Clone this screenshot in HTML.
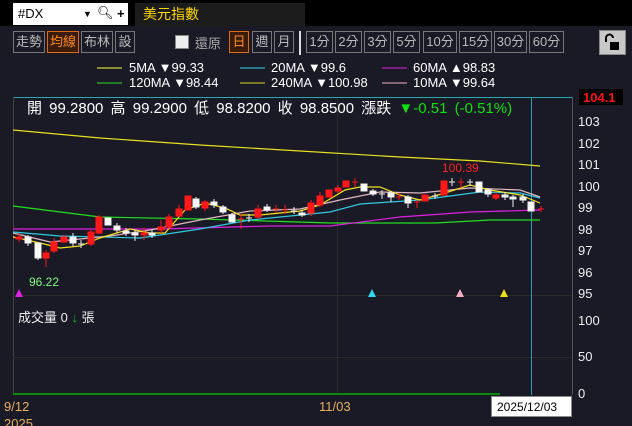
<!DOCTYPE html><html><head><meta charset="utf-8"><style>
body{margin:0;width:632px;height:426px;background:#1a1926;overflow:hidden;position:relative;font-family:"Liberation Sans","Noto Sans CJK TC",sans-serif;color:#ddd}
.a{position:absolute;white-space:nowrap}
.b{position:absolute;top:31px;height:20px;border:1px solid #777;color:#bbb;font-size:13px;line-height:20px;text-align:center;box-sizing:border-box;height:22px}
.o{border-color:#e06a10;color:#ff8a20;background:#3a1c08}
</style></head><body>
<div class="a" style="left:0;top:0;width:632px;height:26px;background:#000"></div>
<div class="a" style="left:13px;top:3px;width:115px;height:22px;background:#fff;color:#000;font-size:13px;line-height:22px;padding-left:5px;box-sizing:border-box">#DX<span style="position:absolute;left:70px;font-size:9px">▼</span><span style="position:absolute;left:84px;top:-1px">🔍︎</span><span style="position:absolute;left:104px;font-weight:bold">+</span></div>
<div class="a" style="left:135px;top:3px;width:170px;height:23px;background:#1c1c1c;color:#ffd800;font-size:14px;line-height:23px;padding-left:8px;box-sizing:border-box">美元指數</div>
<div class="b" style="left:13px;width:32px">走勢</div>
<div class="b o" style="left:47px;width:32px">均線</div>
<div class="b" style="left:81px;width:32px">布林</div>
<div class="b" style="left:115px;width:20px">設</div>
<div class="a" style="left:175px;top:35px;width:12px;height:12px;background:#eee;border:1px solid #888"></div>
<div class="a" style="left:195px;top:33px;font-size:13px;color:#aaa">還原</div>
<div class="b o" style="left:229px;width:20px">日</div>
<div class="b" style="left:252px;width:20px">週</div>
<div class="b" style="left:274px;width:20px">月</div>
<div class="a" style="left:299px;top:31px;width:2px;height:24px;background:#ddd"></div>
<div class="b" style="left:306px;width:27px">1分</div>
<div class="b" style="left:335px;width:27px">2分</div>
<div class="b" style="left:364px;width:27px">3分</div>
<div class="b" style="left:393px;width:27px">5分</div>
<div class="b" style="left:423px;width:34px">10分</div>
<div class="b" style="left:459px;width:33px">15分</div>
<div class="b" style="left:494px;width:33px">30分</div>
<div class="b" style="left:529px;width:35px">60分</div>
<div class="a" style="left:599px;top:30px;width:25px;height:23px;background:#c8c8c8;border:1px solid #888"><svg width="25" height="23"><path d="M6 11V7a3.5 3.5 0 0 1 7 0" stroke="#000" stroke-width="2" fill="none"/><rect x="10" y="11" width="9" height="8" fill="#000"/></svg></div>
<svg class="a" style="left:0;top:0" width="632" height="426">
<g stroke-width="1"><line x1="97" y1="68" x2="122" y2="68" stroke="#ffff40"/><line x1="240" y1="68" x2="265" y2="68" stroke="#30d8e8"/><line x1="382" y1="68" x2="407" y2="68" stroke="#e020e0"/>
<line x1="97" y1="83" x2="122" y2="83" stroke="#30e030"/><line x1="240" y1="83" x2="265" y2="83" stroke="#e8d820"/><line x1="382" y1="83" x2="407" y2="83" stroke="#f0b0c0"/></g>
<g font-size="13" fill="#fff" font-family="Liberation Sans,sans-serif"><text x="129" y="72">5MA ▼99.33</text><text x="271" y="72">20MA ▼99.6</text><text x="413" y="72">60MA ▲98.83</text>
<text x="129" y="87">120MA ▼98.44</text><text x="271" y="87">240MA ▼100.98</text><text x="413" y="87">10MA ▼99.64</text></g>
<line x1="13" y1="97.5" x2="572" y2="97.5" stroke="#2aa8b0"/>
<line x1="13.5" y1="97" x2="13.5" y2="395" stroke="#444"/>
<line x1="572.5" y1="97" x2="572.5" y2="395" stroke="#555"/>
<line x1="337.5" y1="98" x2="337.5" y2="394" stroke="#2a2a2a"/>
<line x1="13" y1="295.5" x2="572" y2="295.5" stroke="#2a2a2a"/>
<line x1="13" y1="357.5" x2="572" y2="357.5" stroke="#2a2a2a"/>
<line x1="13" y1="394" x2="500" y2="394" stroke="#0a8a0a" stroke-width="2"/>
<line x1="531.5" y1="98" x2="531.5" y2="395" stroke="#2a9ab0"/>
<text x="27" y="113" font-size="15" fill="#fff" word-spacing="3">開 99.2800  高 99.2900  低 98.8200  收 98.8500  漲跌 <tspan fill="#10e010">▼-0.51 (-0.51%)</tspan></text>
<rect x="579" y="89" width="44" height="16" fill="#000"/><text x="583" y="102" font-size="13" font-weight="bold" fill="#ff1010">104.1</text>
<g font-size="13" fill="#eee"><text x="578" y="126">103</text><text x="578" y="148">102</text><text x="578" y="169">101</text><text x="578" y="191">100</text><text x="578" y="212">99</text><text x="578" y="234">98</text><text x="578" y="255">97</text><text x="578" y="277">96</text><text x="578" y="298">95</text><text x="578" y="325">100</text><text x="578" y="361">50</text><text x="578" y="398">0</text></g>
<g fill="none" stroke-width="1.2">
<polyline stroke="#e8e020" points="13,130 100,138 200,145 300,151 400,157 480,161 540,166"/>
<polyline stroke="#20e020" points="13,206 100,217 200,219 330,223 435,223 490,220 540,220"/>
<polyline stroke="#e020e0" points="13,229 160,229 270,226 330,226 400,217 470,212 540,210"/>
<polyline stroke="#30c8e0" points="13,232 60,236 140,238 200,229 250,220 330,212 360,204 420,200 480,192 520,193 540,198"/>
<polyline stroke="#e0b8c0" points="13,233 50,242 110,236 150,230 200,220 250,211 300,209 340,200 380,192 420,193 470,188 520,190 540,197"/>
<polyline stroke="#f0e020" points="13,237 40,243 60,248 80,246 100,238 130,229 150,233 165,233 185,210 205,203 225,208 240,215 260,215 300,211 320,205 345,190 360,187 380,187 400,195 420,200 445,193 470,185 490,190 520,195 540,203"/>
</g>
<g>
<g stroke="#ff1818" fill="#ff1818">
<line x1="19" y1="233" x2="19" y2="242"/><rect x="16" y="237" width="6" height="2"/>
<line x1="46" y1="250" x2="46" y2="267"/><rect x="43" y="253" width="6" height="5"/>
<line x1="54" y1="238" x2="54" y2="253"/><rect x="51" y="242" width="6" height="9"/>
<line x1="64" y1="235" x2="64" y2="243"/><rect x="61" y="237" width="6" height="5"/>
<line x1="91" y1="230" x2="91" y2="246"/><rect x="88" y="232" width="6" height="12"/>
<line x1="99" y1="215" x2="99" y2="234"/><rect x="96" y="217" width="6" height="16"/>
<rect x="141" y="233" width="6" height="2"/><line x1="144" y1="228" x2="144" y2="240"/>
<rect x="158" y="227" width="6" height="3"/><line x1="161" y1="220" x2="161" y2="233"/>
<rect x="166" y="217" width="6" height="10"/><line x1="169" y1="214" x2="169" y2="229"/>
<rect x="176" y="209" width="6" height="7"/><line x1="179" y1="205" x2="179" y2="217"/>
<rect x="185" y="196" width="6" height="14"/>
<rect x="202" y="202" width="6" height="6"/><line x1="205" y1="200" x2="205" y2="211"/>
<line x1="238" y1="219" x2="244" y2="219"/><line x1="241" y1="214" x2="241" y2="229"/>
<rect x="255" y="209" width="6" height="8"/><line x1="258" y1="205" x2="258" y2="219"/>
<line x1="273" y1="209" x2="279" y2="209"/><line x1="276" y1="205" x2="276" y2="213"/>
<line x1="282" y1="210" x2="288" y2="210"/><line x1="285" y1="205" x2="285" y2="214"/>
<rect x="308" y="203" width="6" height="10"/><line x1="311" y1="200" x2="311" y2="216"/>
<rect x="317" y="196" width="6" height="9"/><line x1="320" y1="192" x2="320" y2="207"/>
<rect x="326" y="190" width="6" height="7"/>
<rect x="335" y="188" width="6" height="3"/><line x1="338" y1="185" x2="338" y2="193"/>
<rect x="343" y="181" width="6" height="6"/>
<line x1="352" y1="182" x2="358" y2="182"/><line x1="355" y1="178" x2="355" y2="187"/>
<line x1="396" y1="197" x2="402" y2="197"/><line x1="399" y1="193" x2="399" y2="200"/>
<line x1="414" y1="202" x2="420" y2="202"/><line x1="417" y1="200" x2="417" y2="208"/>
<rect x="422" y="195" width="6" height="6"/>
<rect x="441" y="181" width="6" height="14"/>
<line x1="458" y1="182" x2="464" y2="182"/><line x1="461" y1="178" x2="461" y2="188"/>
<rect x="493" y="195" width="6" height="3"/><line x1="496" y1="192" x2="496" y2="200"/>
<line x1="538" y1="209" x2="544" y2="209"/><line x1="541" y1="206" x2="541" y2="212"/>
</g>
<g stroke="#eee" fill="#fff">
<rect x="25" y="237" width="6" height="6"/><line x1="28" y1="235" x2="28" y2="246"/>
<rect x="35" y="243" width="6" height="15"/><line x1="38" y1="243" x2="38" y2="260"/>
<rect x="70" y="237" width="6" height="6"/><line x1="73" y1="233" x2="73" y2="246"/>
<line x1="78" y1="244" x2="84" y2="244"/><line x1="81" y1="240" x2="81" y2="248"/>
<rect x="105" y="218" width="6" height="7"/>
<rect x="114" y="226" width="6" height="4"/><line x1="117" y1="223" x2="117" y2="233"/>
<rect x="123" y="231" width="6" height="2"/><line x1="126" y1="228" x2="126" y2="236"/>
<rect x="132" y="233" width="6" height="2"/><line x1="135" y1="230" x2="135" y2="241"/>
<rect x="149" y="233" width="6" height="2"/><line x1="152" y1="230" x2="152" y2="238"/>
<rect x="193" y="199" width="6" height="8"/><line x1="196" y1="197" x2="196" y2="209"/>
<rect x="211" y="202" width="6" height="3"/><line x1="214" y1="199" x2="214" y2="208"/>
<rect x="220" y="207" width="6" height="5"/><line x1="223" y1="205" x2="223" y2="214"/>
<rect x="229" y="215" width="6" height="7"/><line x1="232" y1="213" x2="232" y2="222"/>
<line x1="246" y1="218" x2="252" y2="218"/><line x1="249" y1="214" x2="249" y2="222"/>
<rect x="264" y="207" width="6" height="3"/><line x1="267" y1="204" x2="267" y2="212"/>
<line x1="291" y1="211" x2="297" y2="211"/><line x1="294" y1="207" x2="294" y2="214"/>
<rect x="299" y="213" width="6" height="2"/><line x1="302" y1="210" x2="302" y2="217"/>
<rect x="361" y="184" width="6" height="7"/>
<rect x="370" y="191" width="6" height="3"/><line x1="373" y1="189" x2="373" y2="196"/>
<line x1="379" y1="194" x2="385" y2="194"/><line x1="382" y1="190" x2="382" y2="199"/>
<rect x="388" y="193" width="6" height="4"/><line x1="391" y1="191" x2="391" y2="202"/>
<rect x="405" y="197" width="6" height="6"/><line x1="408" y1="195" x2="408" y2="208"/>
<line x1="432" y1="196" x2="438" y2="196"/><line x1="435" y1="193" x2="435" y2="199"/>
<line x1="449" y1="182" x2="455" y2="182"/><line x1="452" y1="178" x2="452" y2="186"/>
<line x1="467" y1="182" x2="473" y2="182"/><line x1="470" y1="179" x2="470" y2="186"/>
<rect x="476" y="182" width="6" height="10"/>
<rect x="485" y="190" width="6" height="4"/><line x1="488" y1="188" x2="488" y2="197"/>
<rect x="502" y="195" width="6" height="2"/><line x1="505" y1="192" x2="505" y2="200"/>
<rect x="510" y="197" width="6" height="2"/><line x1="513" y1="195" x2="513" y2="207"/>
<rect x="520" y="197" width="6" height="3"/><line x1="523" y1="194" x2="523" y2="203"/>
<rect x="528" y="202" width="6" height="9"/>
</g>
</g>
<text x="442" y="172" font-size="12" fill="#ff2020">100.39</text>
<text x="29" y="286" font-size="12" fill="#80ff80">96.22</text>
<polygon points="15,297 19,289 23,297" fill="#e020e0"/>
<polygon points="368,297 372,289 376,297" fill="#30d8e8"/>
<polygon points="456,297 460,289 464,297" fill="#f0b0c0"/>
<polygon points="500,297 504,289 508,297" fill="#e8e020"/>
<text x="18" y="322" font-size="13" fill="#eee">成交量 0 <tspan fill="#10c010">↓</tspan> 張</text>
<g font-size="13" fill="#e8b060"><text x="4" y="411">9/12</text><text x="319" y="411">11/03</text><text x="4" y="428">2025</text></g>
<rect x="491.5" y="396.5" width="80" height="20" fill="#fff" stroke="#888"/>
<text x="497" y="411" font-size="12" fill="#000">2025/12/03</text>
</svg>
</body></html>
